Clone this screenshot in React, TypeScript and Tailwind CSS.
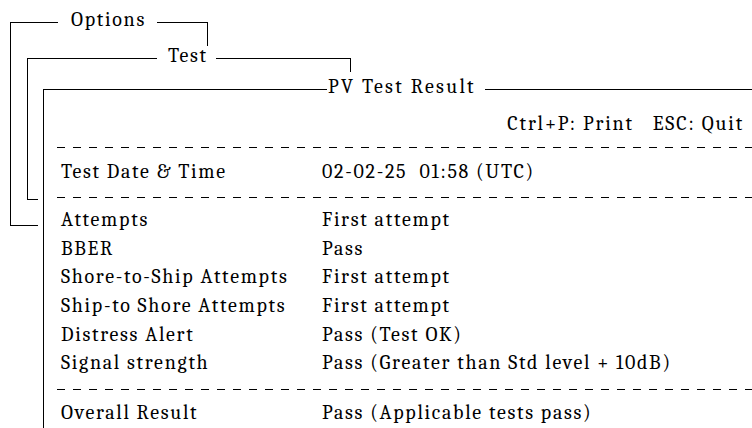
const rows: [string, string][] = [
  ["Attempts", "First attempt"],
  ["BBER", "Pass"],
  ["Shore-to-Ship Attempts", "First attempt"],
  ["Ship-to Shore Attempts", "First attempt"],
  ["Distress Alert", "Pass (Test OK)"],
  ["Signal strength", "Pass (Greater than Std level + 10dB)"],
];

function Dashed({ className = "" }: { className?: string }) {
  return (
    <div
      className={`h-px bg-[repeating-linear-gradient(to_right,#000_0_8px,transparent_8px_16px)] ${className}`}
    />
  );
}

function Row({ label, value }: { label: string; value: string }) {
  return (
    <div className="grid grid-cols-[261px_1fr] pl-[4px] leading-[28.6px] whitespace-pre">
      <span>{label}</span>
      <span>{value}</span>
    </div>
  );
}

export default function App() {
  return (
    <div className="w-[752px] h-[428px] overflow-hidden bg-white text-black pt-[22px] font-serif text-[20px] tracking-[1.7px]">
      {/* Options */}
      <div className="ml-[10px] w-[28px] h-[204px] border-l border-b border-black">
        <div className="flex w-[197px] h-[24px]">
          <div className="w-[47px] shrink-0 border-t border-black" />
          <span className="-mt-[12px] h-[20px] leading-[20px] pl-[13px] pr-[11px]">Options</span>
          <div className="flex-1 border-t border-r border-black" />
        </div>

        {/* Test */}
        <div className="mt-[12px] ml-[16px] w-[11px] h-[142px] border-l border-b border-black">
          <div className="flex w-[323px] h-[14px]">
            <div className="w-[129px] shrink-0 border-t border-black" />
            <span className="-mt-[12px] h-[20px] leading-[20px] pl-[11px] pr-[8px]">Test</span>
            <div className="flex-1 border-t border-r border-black" />
          </div>

          {/* PV Test Result */}
          <div className="mt-[17px] ml-[15px] w-[709px] border-l border-black pb-[20px]">
            <div className="flex h-[21px]">
              <div className="w-[283px] shrink-0 border-t border-black" />
              <span className="-mt-[12px] h-[20px] leading-[20px] pl-[1px] pr-[9px] tracking-[2.3px] whitespace-nowrap">
                PV Test Result
              </span>
              <div className="flex-1 border-t border-black" />
            </div>

            <div className="pl-[13px]">
              <div className="text-right pr-[8px] leading-[28.6px] tracking-[1.85px] whitespace-pre">
                Ctrl+P: Print   ESC: Quit
              </div>
              <Dashed className="mt-[8px]" />
              <div className="mt-[10px]">
                <Row label="Test Date & Time" value="02-02-25  01:58 (UTC)" />
              </div>
              <Dashed className="mt-[11px]" />
              <div className="mt-[8px]">
                {rows.map(([l, v]) => (
                  <Row key={l} label={l} value={v} />
                ))}
              </div>
              <Dashed className="mt-[11px]" />
              <div className="mt-[9px]">
                <Row label="Overall Result" value="Pass (Applicable tests pass)" />
              </div>
            </div>
          </div>
        </div>
      </div>
    </div>
  );
}
